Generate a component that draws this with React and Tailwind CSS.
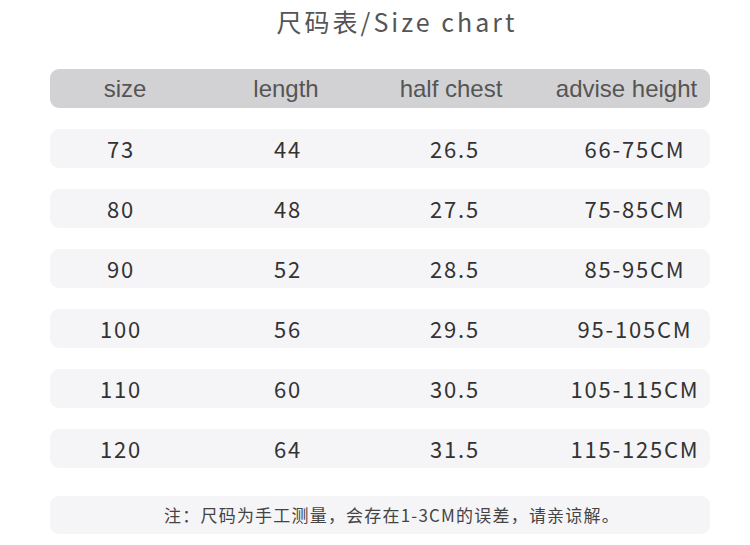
import React from 'react';

const rows = [
  ['73', '44', '26.5', '66-75CM'],
  ['80', '48', '27.5', '75-85CM'],
  ['90', '52', '28.5', '85-95CM'],
  ['100', '56', '29.5', '95-105CM'],
  ['110', '60', '30.5', '105-115CM'],
  ['120', '64', '31.5', '115-125CM'],
];

const cjk = "font-['Noto_Sans_CJK_SC','Noto_Sans',sans-serif]";

export default function App() {
  return (
    <div className="w-[750px] h-[545px] bg-white flex flex-col items-center pl-[10px] overflow-hidden">
      {/* Title */}
      <div className={`h-[44px] flex items-center ml-[34px] text-[25px] tracking-[3px] text-[#555] ${cjk}`}>
        尺码表/Size chart
      </div>

      {/* Header */}
      <div className="mt-[25px] w-[660px] h-[39px] rounded-[9px] bg-[#d2d2d4] grid grid-cols-[150px_172px_158px_1fr] items-center text-[24px] text-[#555] font-['Liberation_Sans',Arial,sans-serif]">
        <div className="text-center">size</div>
        <div className="text-center">length</div>
        <div className="text-center">half chest</div>
        <div className="text-center pl-[13px] whitespace-nowrap">advise height</div>
      </div>

      {/* Rows */}
      <div className="mt-[21px] flex flex-col gap-[21px]">
        {rows.map((r) => (
          <div
            key={r[0]}
            className={`w-[660px] h-[39px] rounded-[9px] bg-[#f5f5f7] grid grid-cols-[150px_172px_158px_1fr] items-center text-[22px] tracking-[1.8px] text-[#333] ${cjk}`}
          >
            <div className="text-center pr-[8px]">{r[0]}</div>
            <div className="text-center pl-[4px]">{r[1]}</div>
            <div className="text-center pl-[8px]">{r[2]}</div>
            <div className="text-center pl-[30px] whitespace-nowrap">{r[3]}</div>
          </div>
        ))}
      </div>

      {/* Note */}
      <div className={`mt-[28px] w-[660px] h-[38px] rounded-[9px] bg-[#f5f5f7] flex items-center justify-center pl-[24px] text-[17px] tracking-[1.2px] text-[#444] ${cjk}`}>
        注：尺码为手工测量，会存在1-3CM的误差，请亲谅解。
      </div>
    </div>
  );
}
